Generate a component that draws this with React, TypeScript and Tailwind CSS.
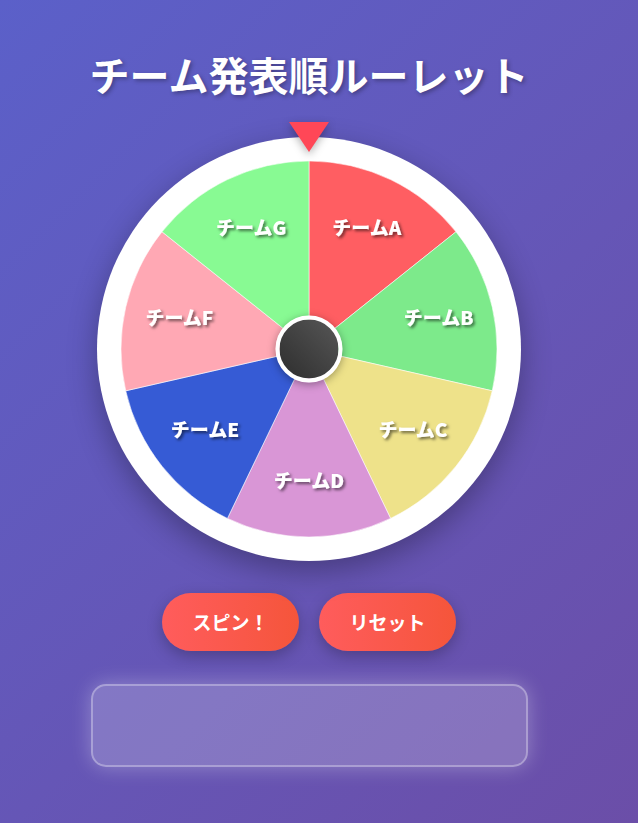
const teams = [
  { name: "チームA", color: "#ff5e62" },
  { name: "チームB", color: "#7dea8b" },
  { name: "チームC", color: "#eee28a" },
  { name: "チームD", color: "#d996d6" },
  { name: "チームE", color: "#365bd5" },
  { name: "チームF", color: "#ffa8b4" },
  { name: "チームG", color: "#88fa93" },
];

const SIZE = 376;
const R = SIZE / 2;

function point(angle: number, radius: number) {
  // angle in degrees, 0 = top, clockwise
  const rad = ((angle - 90) * Math.PI) / 180;
  return [R + radius * Math.cos(rad), R + radius * Math.sin(rad)];
}

function Wheel() {
  const step = 360 / teams.length;

  return (
    <svg width={SIZE} height={SIZE} viewBox={`0 0 ${SIZE} ${SIZE}`} className="block">
      <defs>
        <filter id="labelShadow" x="-20%" y="-50%" width="140%" height="200%">
          <feDropShadow dx="2" dy="2" stdDeviation="1.6" floodColor="#000" floodOpacity="0.55" />
        </filter>
      </defs>
      {teams.map((team, i) => {
        const [x1, y1] = point(i * step, R);
        const [x2, y2] = point((i + 1) * step, R);
        return (
          <path
            key={team.name}
            d={`M ${R} ${R} L ${x1} ${y1} A ${R} ${R} 0 0 1 ${x2} ${y2} Z`}
            fill={team.color}
            stroke="rgba(255,255,255,0.55)"
            strokeWidth={1}
          />
        );
      })}
      {teams.map((team, i) => {
        const [x, y] = point(i * step + step / 2, 133);
        return (
          <text
            key={team.name + "-label"}
            x={x}
            y={y - 3}
            textAnchor="middle"
            dominantBaseline="central"
            fill="#fff"
            fontSize={19}
            fontWeight={900}
            filter="url(#labelShadow)"
            style={{ fontFamily: '"Noto Sans CJK JP", "Noto Sans", sans-serif' }}
          >
            {team.name}
          </text>
        );
      })}
    </svg>
  );
}

export default function App() {
  return (
    <div
      className="min-h-[823px] w-full bg-linear-135 from-[#5b60c9] to-[#6b4ea8]"
      style={{ fontFamily: '"Noto Sans CJK JP", "Noto Sans", sans-serif' }}
    >
      <div className="flex flex-col items-center pt-[50px] pr-[20px] pb-[56px]">
        <h1 className="text-[40px] leading-[48px] font-bold text-white [text-shadow:2px_2px_4px_rgba(0,0,0,0.3)]">
          チーム発表順ルーレット
        </h1>

        {/* Wheel */}
        <div className="relative mt-[39px]">
          <div className="absolute left-1/2 top-[-15px] z-10 -translate-x-1/2 drop-shadow-[0_3px_4px_rgba(0,0,0,0.3)]">
            <svg width="40" height="30" viewBox="0 0 40 30" className="block">
              <polygon points="0,0 40,0 20,30" fill="#ff4757" />
            </svg>
          </div>
          <div className="rounded-full bg-white p-[24px] shadow-[0_10px_30px_rgba(0,0,0,0.3)]">
            <Wheel />
          </div>
          <div className="absolute left-1/2 top-1/2 h-[67px] w-[67px] -translate-x-1/2 -translate-y-1/2 rounded-full border-[4px] border-white bg-linear-to-tr from-[#2e2e2e] to-[#575757] shadow-[0_2px_8px_rgba(0,0,0,0.35)]" />
        </div>

        {/* Buttons */}
        <div className="mt-[32px] flex gap-[20px]">
          <button className="h-[58px] w-[137px] rounded-full bg-linear-to-r from-[#ff5c5c] to-[#f5553a] text-[19px] font-bold text-white shadow-[0_5px_15px_rgba(0,0,0,0.25)]">
            スピン！
          </button>
          <button className="h-[58px] w-[137px] rounded-full bg-linear-to-r from-[#ff5c5c] to-[#f5553a] text-[19px] font-bold text-white shadow-[0_5px_15px_rgba(0,0,0,0.25)]">
            リセット
          </button>
        </div>

        {/* Result */}
        <div className="mt-[33px] h-[83px] w-[437px] rounded-[15px] border-2 border-white/30 bg-white/20 shadow-[0_0_20px_rgba(255,255,255,0.3)]" />
      </div>
    </div>
  );
}
